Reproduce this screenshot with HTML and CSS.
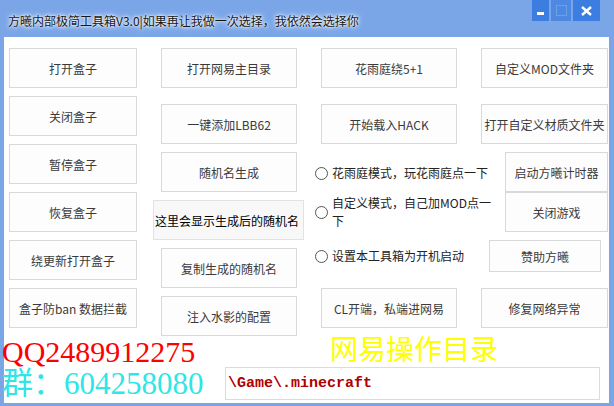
FILE: index.html
```html
<!DOCTYPE html>
<html lang="zh-CN">
<head>
  <meta charset="UTF-8" />
  <title>方曦内部极简工具箱V3.0</title>
  <link rel="stylesheet" href="styles.css">
</head>
<body>
  <div class="window">
    <div class="titlebar">
      <span class="title">方曦内部极简工具箱V3.0|如果再让我做一次选择，我依然会选择你</span>
      <div class="caption">
        <span class="cap cap-min"><i></i></span>
        <span class="cap cap-max"><i></i></span>
        <span class="cap cap-close">
          <svg width="11" height="10" viewBox="0 0 11 10"><path d="M1 1 L10 9 M10 1 L1 9" stroke="#fff" stroke-width="2.4"/></svg>
        </span>
      </div>
    </div>

    <div class="client">
      <div class="panel">
        <div class="col col1">
          <div class="btn">打开盒子</div>
          <div class="btn">关闭盒子</div>
          <div class="btn">暂停盒子</div>
          <div class="btn">恢复盒子</div>
          <div class="btn">绕更新打开盒子</div>
          <div class="btn">盒子防ban 数据拦截</div>
        </div>

        <div class="col col2">
          <div class="btn">打开网易主目录</div>
          <div class="btn spaced">一键添加LBB62</div>
          <div class="btn">随机名生成</div>
          <div class="name-out">这里会显示生成后的随机名</div>
          <div class="btn">复制生成的随机名</div>
          <div class="btn">注入水影的配置</div>
        </div>

        <div class="col col3">
          <div class="btn">花雨庭绕5+1</div>
          <div class="btn spaced">开始载入HACK</div>
          <label class="radio r1"><span class="dot"></span><span class="radio-text">花雨庭模式，玩花雨庭点一下</span></label>
          <label class="radio r2"><span class="dot"></span><span class="radio-text">自定义模式，自己加MOD点一下</span></label>
          <label class="radio r3"><span class="dot"></span><span class="radio-text">设置本工具箱为开机启动</span></label>
          <div class="btn cl">CL开端，私端进网易</div>
        </div>

        <div class="col col4">
          <div class="btn">自定义MOD文件夹</div>
          <div class="btn spaced">打开自定义材质文件夹</div>
          <div class="btn narrow timer">启动方曦计时器</div>
          <div class="btn narrow">关闭游戏</div>
          <div class="btn sponsor">赞助方曦</div>
          <div class="btn fix">修复网络异常</div>
        </div>
      </div>

      <div class="footer">
        <div class="qq">QQ2489912275</div>
        <div class="heading">网易操作目录</div>
        <div class="group">群：604258080</div>
        <div class="pathbox">\Game\.minecraft</div>
      </div>
    </div>
  </div>
</body>
</html>
```

FILE: styles.css
```css
body {
  margin: 0;
  font-family: "Noto Sans CJK SC", "Microsoft YaHei", sans-serif;
  font-size: 12px;
  color: #3a3a3a;
}

.window {
  width: 614px;
  height: 406px;
  background-color: #7aa6e8;
  display: flex;
  flex-direction: column;
}

/* caption */
.titlebar {
  height: 37px;
  display: flex;
  justify-content: space-between;
  align-items: flex-start;
}
.title {
  margin: 12px 0 0 8px;
  line-height: 18px;
  color: #151515;
  text-shadow: 0 0 2px #fff, 0 0 4px #fff, 0 0 6px rgba(255,255,255,0.8);
}
.caption {
  display: flex;
  gap: 2px;
  margin-right: 14px;
}
.cap {
  height: 21px;
  background-color: #3b7de0;
  display: flex;
  align-items: center;
  justify-content: center;
}
.cap-min {
  width: 17px;
}
.cap-min i {
  width: 7px;
  height: 3px;
  margin-top: 5px;
  background: #fff;
}
.cap-max {
  width: 20px;
  background-color: #4d89e2;
}
.cap-max i {
  width: 9px;
  height: 9px;
  border: 1px solid #6d9fe6;
}
.cap-close {
  width: 27px;
}

/* client area */
.client {
  flex: 1;
  margin: 0 5px 3px 4px;
  background-color: #fff;
}
.panel {
  display: grid;
  grid-template-columns: 128px 136px 136px 127px;
  column-gap: 24px;
  padding: 11px 0 0 5px;
}
.col {
  display: flex;
  flex-direction: column;
  align-items: stretch;
  gap: 8px;
}
.btn {
  height: 40px;
  box-sizing: border-box;
  border: 1px solid #d9d9d9;
  background-color: #fdfdfd;
  color: #3a3a3a;
  display: flex;
  align-items: center;
  justify-content: center;
  white-space: nowrap;
}
.spaced {
  margin-top: 8px;
}
.name-out {
  height: 40px;
  box-sizing: border-box;
  margin: 0 -7px 0 -8px;
  padding-left: 1px;
  border: 1px solid #e2e2e2;
  background-color: #f8f8f8;
  color: #000;
  display: flex;
  align-items: center;
  white-space: nowrap;
}

/* radio options */
.col3 {
  gap: 0;
}
.col3 .spaced {
  margin-top: 16px;
}
.radio {
  display: flex;
  align-items: center;
  gap: 4px;
  width: 182px;
  margin-left: -6px;
  line-height: 18px;
  color: #222;
}
.r1 { margin-top: 20px; }
.r2 { margin-top: 12px; }
.r3 { margin-top: 17px; }
.dot {
  flex: none;
  width: 11px;
  height: 11px;
  border: 1px solid #555;
  border-radius: 50%;
  background: #fff;
}
.radio-text {
  flex: 1;
}
.cl {
  margin-top: 23px;
}

.col4 .timer {
  margin-top: 0;
}
.narrow {
  margin-left: 24px;
}
.col4 .narrow + .narrow {
  margin-top: -8px;
}
.sponsor {
  height: 32px;
  margin: 0 7px 0 8px;
}
.fix {
  margin-top: 8px;
}

/* bottom labels */
.footer {
  display: grid;
  grid-template-columns: 221px 375px;
  margin-top: 1px;
}
.qq {
  margin-left: -2px;
  font-family: "Liberation Serif", "Noto Sans CJK SC", serif;
  font-size: 30px;
  line-height: 30px;
  color: #f00;
}
.heading {
  margin: -4px 0 0 105px;
  font-size: 28px;
  line-height: 30px;
  color: #ffff00;
}
.group {
  margin-left: -2px;
  font-family: "Liberation Serif", "Noto Sans CJK SC", serif;
  font-size: 31px;
  line-height: 33px;
  color: #2de6e6;
}
.pathbox {
  height: 33px;
  box-sizing: border-box;
  border: 1px solid #dcdcdc;
  padding-left: 2px;
  display: flex;
  align-items: center;
  font-family: "Liberation Mono", monospace;
  font-size: 15px;
  font-weight: bold;
  color: #b00000;
}
```
